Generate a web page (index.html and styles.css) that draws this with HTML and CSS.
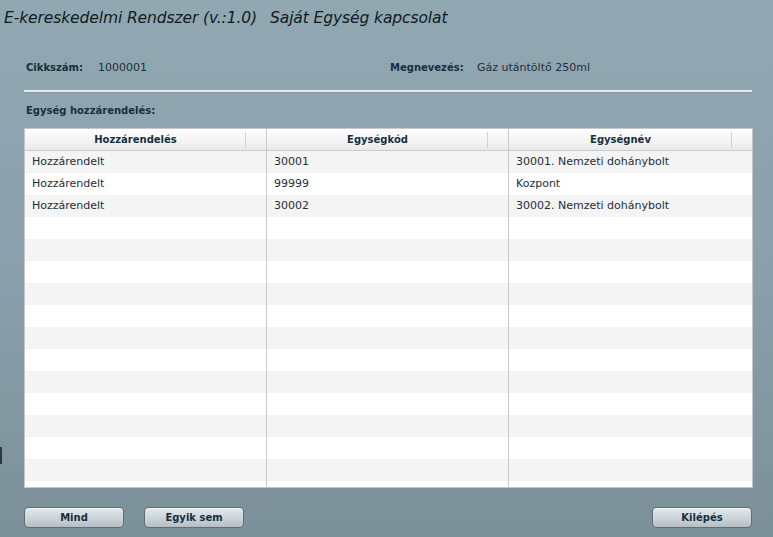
FILE: index.html
```html
<!DOCTYPE html>
<html lang="hu">
<head>
<meta charset="utf-8">
<title>Saját Egység kapcsolat</title>
<link rel="stylesheet" href="styles.css">
</head>
<body>
<div class="app">
  <h1 class="title">E-kereskedelmi Rendszer (v.:1.0)<span class="sub">Saját Egység kapcsolat</span></h1>
  <div class="info">
    <div class="field f1"><span class="lbl">Cikkszám:</span><span class="val">1000001</span></div>
    <div class="field f2"><span class="lbl">Megnevezés:</span><span class="val">Gáz utántöltő 250ml</span></div>
  </div>
  <div class="rule"></div>
  <div class="section">Egység hozzárendelés:</div>
  <div class="grid">
    <div class="head">
      <div class="hc">Hozzárendelés</div>
      <div class="hc">Egységkód</div>
      <div class="hc">Egységnév</div>
    </div>
    <div class="body">
      <div class="row"><div class="c">Hozzárendelt</div><div class="c">30001</div><div class="c">30001. Nemzeti dohánybolt</div></div>
      <div class="row"><div class="c">Hozzárendelt</div><div class="c">99999</div><div class="c">Kozpont</div></div>
      <div class="row"><div class="c">Hozzárendelt</div><div class="c">30002</div><div class="c">30002. Nemzeti dohánybolt</div></div>
      <div class="row"><div class="c"></div><div class="c"></div><div class="c"></div></div>
      <div class="row"><div class="c"></div><div class="c"></div><div class="c"></div></div>
      <div class="row"><div class="c"></div><div class="c"></div><div class="c"></div></div>
      <div class="row"><div class="c"></div><div class="c"></div><div class="c"></div></div>
      <div class="row"><div class="c"></div><div class="c"></div><div class="c"></div></div>
      <div class="row"><div class="c"></div><div class="c"></div><div class="c"></div></div>
      <div class="row"><div class="c"></div><div class="c"></div><div class="c"></div></div>
      <div class="row"><div class="c"></div><div class="c"></div><div class="c"></div></div>
      <div class="row"><div class="c"></div><div class="c"></div><div class="c"></div></div>
      <div class="row"><div class="c"></div><div class="c"></div><div class="c"></div></div>
      <div class="row"><div class="c"></div><div class="c"></div><div class="c"></div></div>
      <div class="row"><div class="c"></div><div class="c"></div><div class="c"></div></div>
      <div class="row"><div class="c"></div><div class="c"></div><div class="c"></div></div>
    </div>
  </div>
  <div class="buttons">
    <button class="btn">Mind</button>
    <button class="btn">Egyik sem</button>
    <span class="spacer"></span>
    <button class="btn">Kilépés</button>
  </div>
  <div class="edge"></div>
</div>
</body>
</html>
```
FILE: styles.css
```css
html, body {
  margin: 0;
  padding: 0;
  width: 773px;
  height: 537px;
  overflow: hidden;
}
body {
  background: linear-gradient(to bottom, #91a7b1 0%, #8aa0aa 50%, #7c9099 100%);
  font-family: "DejaVu Sans", Verdana, sans-serif;
  color: #1b2b38;
}
.app {
  position: relative;
  width: 773px;
  height: 537px;
  display: flex;
  flex-direction: column;
}
.title {
  margin: 0;
  padding: 8px 0 0 4px;
  height: 21px;
  font-size: 15.5px;
  font-weight: normal;
  font-style: italic;
  color: #111a22;
  letter-spacing: -0.1px;
  white-space: nowrap;
  line-height: 20px;
}
.title .sub {
  margin-left: 13px;
}
.info {
  display: flex;
  margin-top: 32px;
  height: 14px;
  font-size: 11px;
  line-height: 14px;
}
.field {
  display: flex;
}
.f1 { margin-left: 26px; width: 364px; }
.lbl {
  font-size: 10px;
  font-weight: bold;
  color: #16303f;
}
.f1 .lbl { width: 72px; }
.f2 .lbl { width: 87px; }
.val { color: #1e2e3a; }
.rule {
  margin: 15px 0 0 24px;
  width: 728px;
  height: 2px;
  background: #e6eaec;
  box-shadow: 0 1px 0 rgba(120,130,140,0.3);
}
.section {
  margin: 12px 0 0 26px;
  height: 14px;
  font-size: 10px;
  line-height: 14px;
  font-weight: bold;
  color: #16303f;
}
.grid {
  margin: 10px 0 0 24px;
  width: 727px;
  height: 358px;
  border: 1px solid #c3c7ca;
  background: #ffffff;
  overflow: hidden;
  font-size: 11px;
}
.head {
  display: grid;
  grid-template-columns: 242px 242px 243px;
  height: 21px;
  border-bottom: 1px solid #c8cbce;
  background: linear-gradient(to bottom, #ffffff 0%, #f3f3f3 60%, #e9e9e9 100%);
}
.hc {
  position: relative;
  text-align: center;
  font-size: 10px;
  font-weight: bold;
  line-height: 21px;
  color: #16303f;
  border-right: 1px solid #c8cbce;
  padding-right: 20px;
}
.hc:last-child { border-right: none; }
.hc::after {
  content: "";
  position: absolute;
  right: 20px;
  top: 3px;
  width: 1px;
  height: 16px;
  background: #cfd2d4;
}
.row {
  display: grid;
  grid-template-columns: 242px 242px 243px;
  height: 22px;
  background: #ffffff;
}
.row:nth-child(odd) { background: #f4f4f4; }
.c {
  border-right: 1px solid #c6c9cc;
  padding-left: 7px;
  line-height: 22px;
  color: #1e2e3a;
  white-space: nowrap;
}
.c:last-child { border-right: none; }
.buttons {
  display: flex;
  margin: 19px 0 0 24px;
  width: 728px;
  gap: 20px;
}
.spacer { flex: 1; }
.btn {
  width: 100px;
  height: 21px;
  padding: 0;
  border: 1px solid #5f6e76;
  border-radius: 4px;
  background: linear-gradient(to bottom, #e4e9ec 0%, #cdd5d9 50%, #b4bec4 100%);
  box-shadow: inset 0 1px 0 rgba(255,255,255,0.7);
  font-family: "DejaVu Sans", Verdana, sans-serif;
  font-size: 10px;
  font-weight: bold;
  color: #15303f;
}
.edge {
  position: absolute;
  left: 0;
  top: 447px;
  width: 2px;
  height: 17px;
  background: #2e3a40;
}
```
